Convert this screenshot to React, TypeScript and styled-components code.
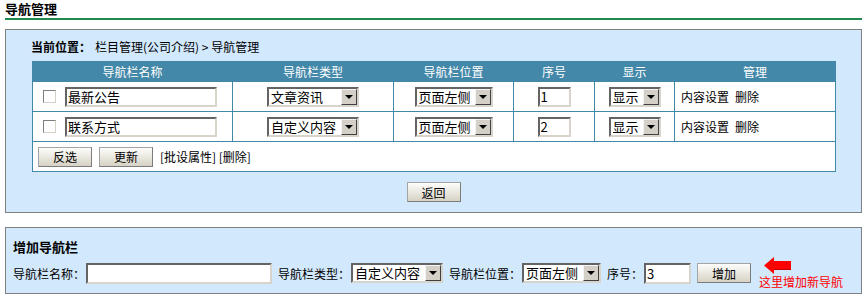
import React from 'react';
import styled, { createGlobalStyle } from 'styled-components';

const FONT = `"Noto Sans CJK SC", "Liberation Sans", sans-serif`;

const GlobalStyle = createGlobalStyle`
  html, body { margin: 0; padding: 0; background: #ffffff; }
  body {
    font-family: ${FONT};
    font-size: 12px;
    color: #000;
  }
  * { box-sizing: border-box; }
`;

const Page = styled.div`
  width: 863px;
  padding: 0 1px 0 5px;
`;

const TitleBar = styled.div`
  height: 20px;
  line-height: 18px;
  font-size: 13px;
  font-weight: bold;
  border-bottom: 2px solid #1e8a4e;
`;

const Panel = styled.div<{ $top: number }>`
  margin-top: ${p => p.$top}px;
  border: 1px solid #808080;
  background: #d2e8fc;
`;

const MainPanel = styled(Panel)`
  padding: 7px 26px 10px;
`;

const AddPanel = styled(Panel)`
  padding: 9px 7px 4px;
`;

const Location = styled.div`
  height: 20px;
  line-height: 20px;
  margin-bottom: 4px;
  margin-left: -1px;
`;

const Strong = styled.b`
  font-weight: bold;
  margin-right: 4px;
`;

const Table = styled.table`
  width: 100%;
  table-layout: fixed;
  border-collapse: collapse;
  border: 1px solid #4388a9;
  background: #ffffff;
`;

const Th = styled.th`
  height: 20px;
  padding: 0;
  background: #4388a9;
  color: #ffffff;
  font-weight: normal;
  font-size: 12px;
  text-align: center;
  border: 1px solid #4388a9;
`;

const Td = styled.td<{ $align?: string; $pl?: number }>`
  height: 30px;
  padding: 0 0 0 ${p => p.$pl ?? 0}px;
  border: 1px solid #4388a9;
  text-align: ${p => p.$align ?? 'center'};
  vertical-align: middle;
  white-space: nowrap;
`;

const Cell = styled.div<{ $justify?: string }>`
  display: flex;
  align-items: center;
  justify-content: ${p => p.$justify ?? 'center'};
`;

const Check = styled.input.attrs({ type: 'checkbox' })`
  appearance: none;
  width: 13px;
  height: 13px;
  margin: 0 9px 0 0;
  border: 1px solid;
  border-color: #7f7f7f #d4d0c8 #d4d0c8 #7f7f7f;
  background: #fff;
`;

const TextInput = styled.input<{ $w: number; $h?: number }>`
  width: ${p => p.$w}px;
  height: ${p => p.$h ?? 20}px;
  margin: 0;
  padding: 0 1px;
  border: 2px solid;
  border-color: #646464 #d8d4cc #d8d4cc #646464;
  background: #fff;
  font-family: ${FONT};
  font-size: 13px;
  color: #000;
  outline: none;
`;

const SelectFrame = styled.span<{ $w: number; $h?: number }>`
  display: inline-flex;
  align-items: stretch;
  width: ${p => p.$w}px;
  height: ${p => p.$h ?? 20}px;
  border: 2px solid;
  border-color: #646464 #d8d4cc #d8d4cc #646464;
  background: #fff;
`;

const NativeSelect = styled.select`
  appearance: none;
  flex: 1;
  min-width: 0;
  margin: 0;
  padding: 0 0 1px 2px;
  border: none;
  background: transparent;
  font-family: ${FONT};
  font-size: 13px;
  line-height: 15px;
  color: #000;
  outline: none;
`;

const Arrow = styled.span`
  width: 16px;
  flex: none;
  display: flex;
  align-items: center;
  justify-content: center;
  background: #d4d0c8;
  border: 1px solid;
  border-color: #f4f4f4 #404040 #404040 #f4f4f4;
  &::after {
    content: '';
    width: 0;
    height: 0;
    border-left: 4px solid transparent;
    border-right: 4px solid transparent;
    border-top: 4px solid #000;
  }
`;

const Button = styled.button`
  width: 54px;
  height: 20px;
  margin: 0;
  padding: 0;
  border: 1px solid;
  border-color: #a4a4a4 #7c7c7c #7c7c7c #a4a4a4;
  background: linear-gradient(#fdfdfb, #d6d2c4);
  font-family: ${FONT};
  font-size: 12px;
  color: #000;
`;

const ButtonRow = styled.div`
  display: flex;
  align-items: center;
  gap: 7px;
`;

const Action = styled.span`
  margin-left: 6px;
`;

const Center = styled.div`
  display: flex;
  justify-content: center;
  margin-top: 10px;
`;

const SectionTitle = styled.div`
  height: 20px;
  line-height: 20px;
  font-size: 13px;
  font-weight: bold;
`;

const AddRow = styled.div`
  display: flex;
  align-items: center;
  height: 32px;
  gap: 6px;
`;

const Field = styled.label`
  display: flex;
  align-items: center;
  gap: 1px;
  white-space: nowrap;
`;

const Hint = styled.div`
  display: flex;
  flex-direction: column;
  align-items: flex-start;
  margin-left: 2px;
  color: #ff0000;
  line-height: 14px;
`;

const ArrowIcon = styled.svg`
  display: block;
  margin-left: 5px;
  margin-bottom: 1px;
`;

const Select = ({ w, value, options, h }: { w: number; value: string; options: string[]; h?: number }) => (
  <SelectFrame $w={w} $h={h}>
    <NativeSelect defaultValue={value}>
      {options.map(o => (
        <option key={o} value={o}>{o}</option>
      ))}
    </NativeSelect>
    <Arrow />
  </SelectFrame>
);

const TYPES = ['文章资讯', '自定义内容'];
const POS = ['页面左侧', '页面顶部'];
const SHOW = ['显示', '隐藏'];

const rows = [
  { name: '最新公告', type: '文章资讯', order: '1' },
  { name: '联系方式', type: '自定义内容', order: '2' },
];

export default function App() {
  return (
    <Page>
      <GlobalStyle />
      <TitleBar>导航管理</TitleBar>
      <MainPanel $top={9}>
        <Location>
          <Strong>当前位置：</Strong>栏目管理(公司介绍) &gt; 导航管理
        </Location>
        <Table>
          <colgroup>
            <col style={{ width: 200 }} />
            <col style={{ width: 161 }} />
            <col style={{ width: 120 }} />
            <col style={{ width: 81 }} />
            <col style={{ width: 80 }} />
            <col style={{ width: 161 }} />
          </colgroup>
          <thead>
            <tr>
              <Th>导航栏名称</Th>
              <Th>导航栏类型</Th>
              <Th>导航栏位置</Th>
              <Th>序号</Th>
              <Th>显示</Th>
              <Th>管理</Th>
            </tr>
          </thead>
          <tbody>
            {rows.map(r => (
              <tr key={r.name}>
                <Td $align="left" $pl={10}>
                  <Cell $justify="flex-start">
                    <Check />
                    <TextInput $w={152} defaultValue={r.name} />
                  </Cell>
                </Td>
                <Td>
                  <Cell>
                    <Select w={92} value={r.type} options={TYPES} />
                  </Cell>
                </Td>
                <Td>
                  <Cell>
                    <Select w={78} value="页面左侧" options={POS} />
                  </Cell>
                </Td>
                <Td>
                  <Cell>
                    <TextInput $w={33} defaultValue={r.order} />
                  </Cell>
                </Td>
                <Td>
                  <Cell>
                    <Select w={52} value="显示" options={SHOW} />
                  </Cell>
                </Td>
                <Td $align="left" $pl={6}>
                  内容设置<Action>删除</Action>
                </Td>
              </tr>
            ))}
            <tr>
              <Td colSpan={6} $align="left" $pl={5}>
                <ButtonRow>
                  <Button>反选</Button>
                  <Button>更新</Button>
                  <span>[批设属性] [删除]</span>
                </ButtonRow>
              </Td>
            </tr>
          </tbody>
        </Table>
        <Center>
          <Button>返回</Button>
        </Center>
      </MainPanel>
      <AddPanel $top={14}>
        <SectionTitle>增加导航栏</SectionTitle>
        <AddRow>
          <Field>
            导航栏名称：<TextInput $w={186} $h={21} />
          </Field>
          <Field>
            导航栏类型：<Select w={92} value="自定义内容" options={TYPES} />
          </Field>
          <Field>
            导航栏位置：<Select w={79} value="页面左侧" options={POS} />
          </Field>
          <Field>
            序号：<TextInput $w={47} $h={21} defaultValue="3" />
          </Field>
          <Button>增加</Button>
          <Hint>
            <ArrowIcon width="27" height="17" viewBox="0 0 27 17">
              <polygon points="0,8.5 10,0 10,4 27,4 27,13 10,13 10,17" fill="#ff0000" />
              <polygon points="10,13 27,13 27,12 10,12" fill="#c80000" />
            </ArrowIcon>
            <span>这里增加新导航</span>
          </Hint>
        </AddRow>
      </AddPanel>
    </Page>
  );
}
